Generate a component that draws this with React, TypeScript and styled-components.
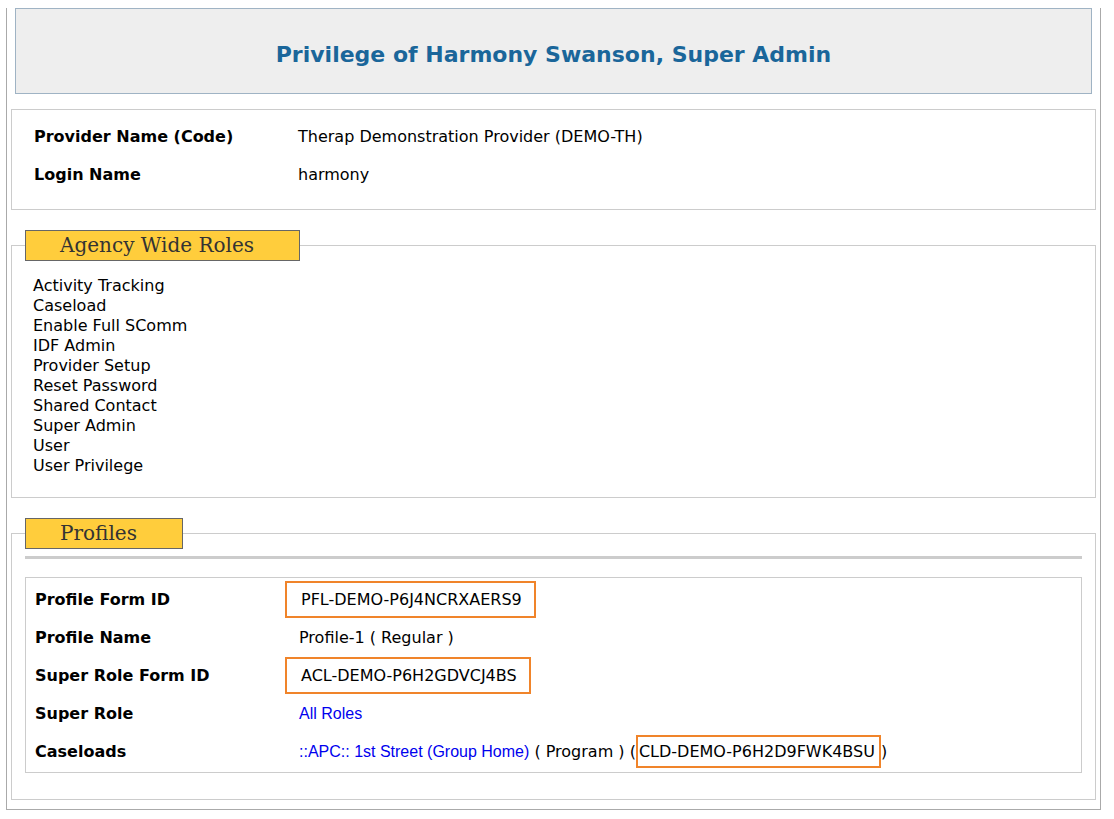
import React from "react";
import styled, { createGlobalStyle } from "styled-components";

const Global = createGlobalStyle`
  body {
    margin: 0;
    background: #fff;
    font-family: "DejaVu Sans", Verdana, sans-serif;
    color: #000;
  }
`;

const Page = styled.div`
  margin: 8px 0 0 6px;
  width: 1095px;
  height: 802px;
  border: 1px solid #aaa;
  border-top: none;
  padding: 0 4px;
  box-sizing: border-box;
`;

const Header = styled.div`
  margin: 0 4px 0 4px;
  height: 86px;
  background: #eeeeee;
  border: 1px solid #9fb3c4;
  display: flex;
  align-items: center;
  justify-content: center;
  box-sizing: border-box;
  padding-top: 6px;
`;

const Title = styled.h1`
  margin: 0;
  font-size: 22px;
  font-weight: bold;
  color: #1a669a;
`;

const InfoBox = styled.div`
  margin-top: 15px;
  height: 101px;
  border: 1px solid #ccc;
  box-sizing: border-box;
  padding: 7px 22px;
`;

const Row = styled.div<{ $h?: number }>`
  display: grid;
  grid-template-columns: 264px 1fr;
  align-items: center;
  height: ${(p) => p.$h ?? 38}px;
  font-size: 16px;
`;

const Label = styled.div`
  font-weight: bold;
`;

const Fieldset = styled.fieldset`
  margin: 20px 0 0;
  border: 1px solid #ccc;
  padding: 0;
  min-width: 0;
`;

const Legend = styled.legend<{ $w: number }>`
  margin-left: 13px;
  width: ${(p) => p.$w}px;
  height: 31px;
  box-sizing: border-box;
  background: #ffcd3c;
  border: 1px solid #666;
  padding: 0 0 0 34px;
  font-family: "DejaVu Serif", Georgia, serif;
  font-size: 20px;
  line-height: 28px;
  color: #333;
`;

const RoleList = styled.div`
  padding: 15px 21px 21px;
  font-size: 16px;
  line-height: 20px;
`;

const Divider = styled.div`
  margin: 7px 13px 0 13px;
  height: 3px;
  background: #ccc;
`;

const Table = styled.div`
  margin: 18px 13px 26px;
  border: 1px solid #ccc;
  padding: 2px 9px;
`;

const Id = styled.span`
  display: inline-block;
  border: 2px solid #f0842a;
  padding: 7px 12px 7px 14px;
  margin-left: -14px;
`;

const Link = styled.a`
  color: #0000ee;
  text-decoration: none;
  font-family: "Liberation Sans", Arial, sans-serif;
`;

const roles = [
  "Activity Tracking",
  "Caseload",
  "Enable Full SComm",
  "IDF Admin",
  "Provider Setup",
  "Reset Password",
  "Shared Contact",
  "Super Admin",
  "User",
  "User Privilege",
];

export default function App() {
  return (
    <>
      <Global />
      <Page>
        <Header>
          <Title>Privilege of Harmony Swanson, Super Admin</Title>
        </Header>
        <InfoBox>
          <Row>
            <Label>Provider Name (Code)</Label>
            <div>Therap Demonstration Provider (DEMO-TH)</div>
          </Row>
          <Row>
            <Label>Login Name</Label>
            <div>harmony</div>
          </Row>
        </InfoBox>
        <Fieldset>
          <Legend $w={275}>Agency Wide Roles</Legend>
          <RoleList>
            {roles.map((r) => (
              <div key={r}>{r}</div>
            ))}
          </RoleList>
        </Fieldset>
        <Fieldset>
          <Legend $w={158}>Profiles</Legend>
          <Divider />
          <Table>
            <Row>
              <Label>Profile Form ID</Label>
              <div><Id>PFL-DEMO-P6J4NCRXAERS9</Id></div>
            </Row>
            <Row>
              <Label>Profile Name</Label>
              <div>Profile-1 ( Regular )</div>
            </Row>
            <Row>
              <Label>Super Role Form ID</Label>
              <div><Id>ACL-DEMO-P6H2GDVCJ4BS</Id></div>
            </Row>
            <Row>
              <Label>Super Role</Label>
              <div><Link href="#">All Roles</Link></div>
            </Row>
            <Row>
              <Label>Caseloads</Label>
              <div>
                <Link href="#">::APC:: 1st Street (Group Home)</Link> ( Program ) (
                <Id style={{ marginLeft: 0, padding: "5px 4px 5px 1px" }}>CLD-DEMO-P6H2D9FWK4BSU</Id>)
              </div>
            </Row>
          </Table>
        </Fieldset>
      </Page>
    </>
  );
}
